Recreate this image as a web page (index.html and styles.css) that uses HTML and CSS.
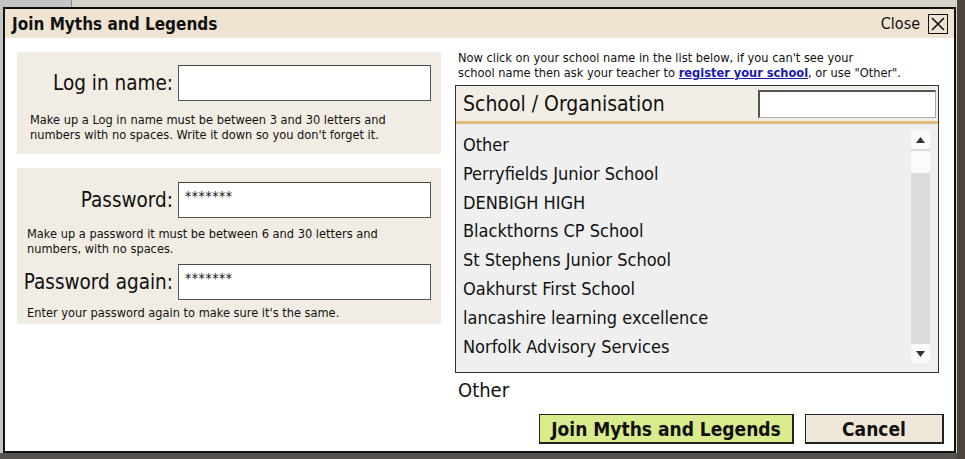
FILE: index.html
```html
<!DOCTYPE html>
<html>
<head>
<meta charset="utf-8">
<link rel="stylesheet" href="styles.css">
</head>
<body>
<div class="dialog">
  <div class="titlebar">
    <span class="title">Join Myths and Legends</span>
    <span class="close">Close <span class="xbox"><svg width="16" height="16" viewBox="0 0 16 16"><path d="M2 2 L14 14 M14 2 L2 14" stroke="#111" stroke-width="1.6" fill="none"/></svg></span></span>
  </div>
  <div class="content">
    <div class="left">
      <div class="panel p1">
        <div class="row">
          <label class="lbl">Log in name:</label>
          <div class="input"></div>
        </div>
        <p class="help h1">Make up a Log in name must be between 3 and 30 letters and numbers with no spaces. Write it down so you don't forget it.</p>
      </div>
      <div class="panel p2">
        <div class="row">
          <label class="lbl">Password:</label>
          <div class="input pw">*******</div>
        </div>
        <p class="help">Make up a password it must be between 6 and 30 letters and numbers, with no spaces.</p>
        <div class="row">
          <label class="lbl">Password again:</label>
          <div class="input pw">*******</div>
        </div>
        <p class="help last">Enter your password again to make sure it's the same.</p>
      </div>
    </div>
    <div class="right">
      <p class="intro">Now click on your school name in the list below, if you can't see your<br>school name then ask your teacher to <a href="#">register your school</a>, or use "Other".</p>
      <div class="table">
        <div class="thead">
          <span class="th">School / Organisation</span>
          <div class="search"></div>
        </div>
        <div class="tbody">
          <ul class="list">
            <li>Other</li>
            <li>Perryfields Junior School</li>
            <li>DENBIGH HIGH</li>
            <li>Blackthorns CP School</li>
            <li>St Stephens Junior School</li>
            <li>Oakhurst First School</li>
            <li>lancashire learning excellence</li>
            <li>Norfolk Advisory Services</li>
          </ul>
          <div class="scrollbar">
            <div class="sbtn"><svg width="9" height="6" viewBox="0 0 9 6"><path d="M4.5 0 L9 6 L0 6 Z" fill="#333"/></svg></div>
            <div class="thumb"></div>
            <div class="track"></div>
            <div class="sbtn"><svg width="9" height="6" viewBox="0 0 9 6"><path d="M0 0 L9 0 L4.5 6 Z" fill="#333"/></svg></div>
          </div>
        </div>
      </div>
      <div class="selected">Other</div>
      <div class="buttons">
        <button class="btn join">Join Myths and Legends</button>
        <button class="btn cancel">Cancel</button>
      </div>
    </div>
  </div>
</div>
</body>
</html>
```
FILE: styles.css
```css
html, body {
  margin: 0;
  padding: 0;
}
body {
  width: 965px;
  height: 459px;
  overflow: hidden;
  font-family: "DejaVu Sans Condensed", "DejaVu Sans", sans-serif;
  font-stretch: condensed;
  color: #111;
  background:
    linear-gradient(to right, transparent 957px, #4a443d 957px),
    linear-gradient(to bottom, transparent 453px, #55524d 453px),
    linear-gradient(to right, #c4c4c4 0, #c4c4c4 71px, #8c8c8c 71px, #8c8c8c 72px, #d8d3c9 72px);
  padding: 7px 0 0 3px;
  box-sizing: border-box;
}
.dialog {
  width: 953px;
  height: 446px;
  box-sizing: border-box;
  border: 2px solid #111;
  background: #fff;
  display: flex;
  flex-direction: column;
}
.titlebar {
  flex: none;
  height: 29px;
  background: #efe4d1;
  display: flex;
  align-items: center;
  justify-content: space-between;
  padding: 0 6px 0 7px;
}
.title {
  font-weight: bold;
  font-size: 17px;
}
.close {
  display: flex;
  align-items: center;
  gap: 8px;
  font-size: 16px;
}
.xbox {
  width: 18px;
  height: 18px;
  border: 1.5px solid #111;
  display: flex;
  align-items: center;
  justify-content: center;
}
.content {
  flex: 1;
  min-height: 0;
  display: flex;
  gap: 14px;
  padding: 14px 15px 0 12px;
}
.left {
  width: 424px;
  display: flex;
  flex-direction: column;
  gap: 14px;
}
.panel {
  background: #f2ede4;
  padding: 13px 10px 0 10px;
}
.p1 { height: 102px; box-sizing: border-box; }
.p2 { height: 156px; box-sizing: border-box; padding-top: 14px; }
.row {
  display: flex;
  align-items: center;
}
.lbl {
  flex: 1 1 0;
  min-width: 0;
  display: flex;
  justify-content: flex-end;
  padding-right: 5px;
  font-size: 20.5px;
  white-space: nowrap;
}
.input {
  flex: none;
  width: 253px;
  height: 36px;
  box-sizing: border-box;
  border: 1px solid #555;
  border-top-color: #444;
  background: #fff;
  font-size: 14px;
  padding: 5px 0 0 6px;
  letter-spacing: 0.5px;
}
.help {
  margin: 0;
  font-size: 12.7px;
  line-height: 15px;
  max-width: 372px;
}
.h1 { margin-top: 11px; padding-left: 3px; }
.p2 .help { margin-top: 8px; margin-bottom: 8px; }
.p2 .help.last { margin-top: 5px; margin-bottom: 0; }
.right {
  width: 485px;
  display: flex;
  flex-direction: column;
}
.intro {
  margin: -2px 0 5px 3px;
  font-size: 12.7px;
  line-height: 15px;
  white-space: nowrap;
}
.intro a {
  color: #1a1ab0;
  font-weight: bold;
}
.table {
  flex: none;
  height: 288px;
  box-sizing: border-box;
  border: 1px solid #333;
  display: flex;
  flex-direction: column;
}
.thead {
  flex: none;
  height: 38px;
  box-sizing: border-box;
  background: #f3eee5;
  border-bottom: 3px solid #e2bb7f;
  display: flex;
  align-items: center;
  justify-content: space-between;
  padding: 0 2px 0 7px;
}
.th {
  font-size: 21px;
}
.search {
  width: 178px;
  height: 28px;
  box-sizing: border-box;
  background: #fff;
  border: 1px solid #222;
  border-top: 2px solid #555;
  border-left: 2px solid #555;
  border-right-color: #aaa;
  border-bottom-color: #aaa;
}
.tbody {
  flex: 1;
  min-height: 0;
  background: #efefef;
  display: flex;
  justify-content: space-between;
  padding: 6px 7px 9px 7px;
}
.list {
  list-style: none;
  margin: 1px 0 0 0;
  padding: 0;
  font-size: 18px;
}
.list li {
  height: 28.8px;
  line-height: 28.8px;
}
.scrollbar {
  width: 19px;
  margin-right: 1px;
  display: flex;
  flex-direction: column;
  background: #dcdcdc;
  border-radius: 2px;
}
.sbtn {
  height: 19px;
  background: #fafafa;
  border-radius: 2px;
  display: flex;
  align-items: center;
  justify-content: center;
}
.thumb {
  height: 22px;
  margin-top: 2px;
  background: #fbfbfb;
  border-radius: 2px;
}
.track { flex: 1; }
.selected {
  font-size: 20px;
  margin: 5px 0 0 3px;
  height: 28px;
  line-height: 24px;
}
.buttons {
  display: flex;
  justify-content: flex-end;
  gap: 11px;
  margin-top: 8px;
  margin-right: -5px;
}
.btn {
  font-family: inherit;
  font-stretch: condensed;
  font-weight: bold;
  font-size: 19px;
  height: 30px;
  padding: 0;
  border: 1px solid #222;
  border-right-width: 2px;
  border-bottom-width: 2px;
  color: #111;
}
.join {
  width: 255px;
  background: #d9ec8d;
}
.cancel {
  width: 139px;
  background: #efe7d8;
}
```
